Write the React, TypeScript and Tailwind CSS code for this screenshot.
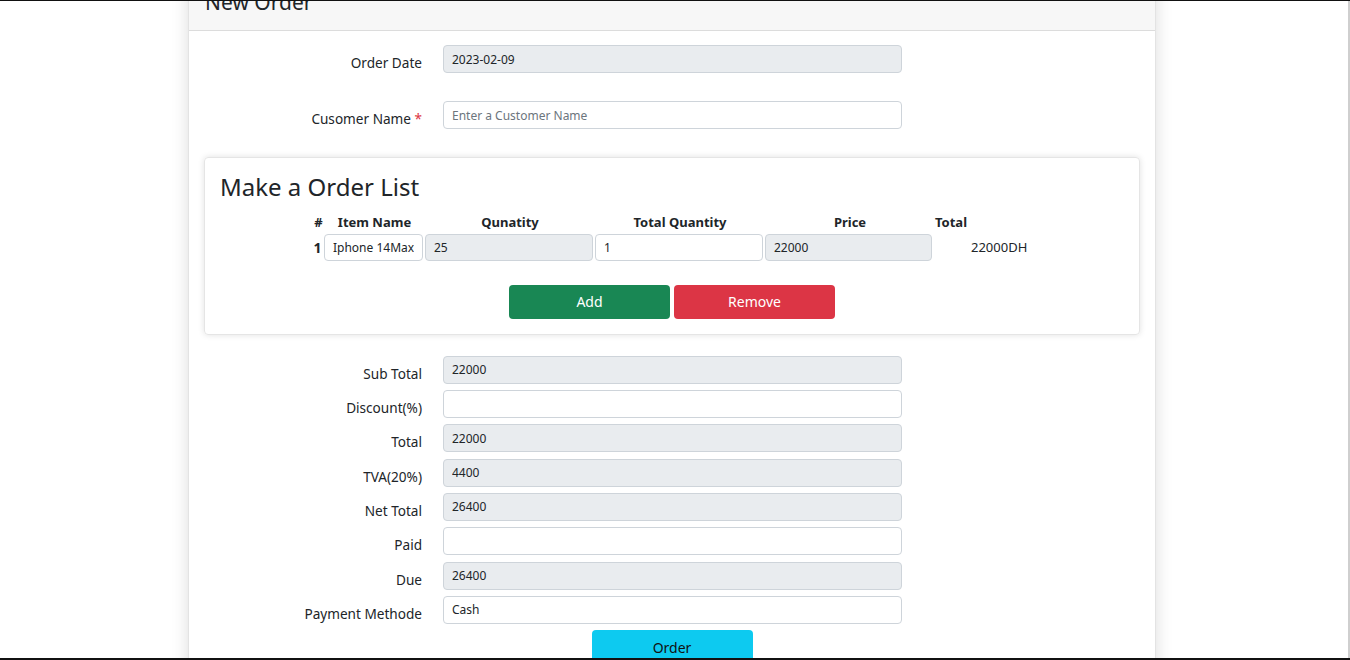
import React from "react"

const font = { fontFamily: '"Noto Sans", "Open Sans", sans-serif' }

type Row = { label: string; value: string; readOnly?: boolean }

const summaryRows: Row[] = [
  { label: "Sub Total", value: "22000", readOnly: true },
  { label: "Discount(%)", value: "" },
  { label: "Total", value: "22000", readOnly: true },
  { label: "TVA(20%)", value: "4400", readOnly: true },
  { label: "Net Total", value: "26400", readOnly: true },
  { label: "Paid", value: "" },
  { label: "Due", value: "26400", readOnly: true },
  { label: "Payment Methode", value: "Cash" },
]

function Field({ value, readOnly, placeholder, className }: { value: string; readOnly?: boolean; placeholder?: string; className?: string }) {
  return (
    <input
      readOnly
      value={value}
      placeholder={placeholder}
      className={
        "h-[28px] rounded-[4px] border border-[#ced4da] px-[8px] text-[12px] text-[#212529] outline-none placeholder:text-[#6c757d] " +
        (readOnly ? "bg-[#e9ecef] " : "bg-white ") +
        (className ?? "")
      }
    />
  )
}

function FormRow({ label, value, readOnly, required, placeholder }: Row & { required?: boolean; placeholder?: string }) {
  return (
    <div className="flex items-start">
      <label className="w-[233px] pt-[8px] text-right text-[13.6px] leading-[19px] text-[#212529]">
        {label}
        {required && <span className="text-[#dc3545]"> *</span>}
      </label>
      <Field value={value} readOnly={readOnly} placeholder={placeholder} className="ml-[21px] w-[459px]" />
    </div>
  )
}

export default function App() {
  return (
    <div style={font} className="relative h-[660px] overflow-hidden border-t border-b-2 border-[#111] bg-white">
      <div className="absolute right-0 top-0 h-full w-[2px] bg-[#cfcfcf]" />
      <div className="ml-[188px] mt-[-31px] w-[968px] border-x border-[#e3e3e3] bg-white shadow-[0_0_16px_rgba(0,0,0,0.14)]">
        {/* card header */}
        <div className="h-[61px] border-b border-[#dcdcdc] bg-[#f7f7f7] px-[16px] pt-[20px]">
          <h2 className="text-[21px] leading-[1.2] text-[#212529]">New Order</h2>
        </div>

        <div className="pt-[14px]">
          <FormRow label="Order Date" value="2023-02-09" readOnly />
          <div className="mt-[28px]">
            <FormRow label="Cusomer Name" value="" required placeholder="Enter a Customer Name" />
          </div>

          {/* order list */}
          <div className="mx-[15px] mt-[28px] rounded-[4px] border border-[#e5e5e5] px-[15px] pb-[15px] pt-[15px] shadow-[0_0_6px_rgba(0,0,0,0.12)]">
            <h3 className="text-[24px] leading-[1.2] text-[#212529]">Make a Order List</h3>
            <div className="ml-[93px] mt-[10px] text-[13px] text-[#212529]">
              <div className="flex font-bold leading-[20px]">
                <div className="w-[11px] text-center">#</div>
                <div className="w-[101px] text-center">Item Name</div>
                <div className="w-[170px] text-center">Qunatity</div>
                <div className="w-[170px] text-center">Total Quantity</div>
                <div className="w-[170px] text-center">Price</div>
                <div>Total</div>
              </div>
              <div className="mt-[2px] flex items-center gap-[2px]">
                <div className="w-[9px] text-center text-[14px] font-bold">1</div>
                <Field value="Iphone 14Max" className="w-[99px] !h-[27px]" />
                <Field value="25" readOnly className="w-[168px] !h-[27px]" />
                <Field value="1" className="w-[168px] !h-[27px]" />
                <Field value="22000" readOnly className="w-[167px] !h-[27px]" />
                <div className="ml-[37px] text-[13px]">22000DH</div>
              </div>
            </div>
            <div className="mt-[24px] flex justify-center gap-[4px]">
              <button className="h-[34px] w-[161px] rounded-[4px] bg-[#198754] text-[14px] text-white">Add</button>
              <button className="h-[34px] w-[161px] rounded-[4px] bg-[#dc3545] text-[14px] text-white">Remove</button>
            </div>
          </div>

          {/* summary */}
          <div className="mt-[21px] flex flex-col gap-[6.3px]">
            {summaryRows.map((r) => (
              <FormRow key={r.label} {...r} />
            ))}
          </div>
          <div className="mt-[6px] flex justify-center pb-[10px]">
            <button className="h-[36px] w-[161px] rounded-[4px] bg-[#0dcaf0] text-[14px] text-[#111]">Order</button>
          </div>
        </div>
      </div>
    </div>
  )
}
